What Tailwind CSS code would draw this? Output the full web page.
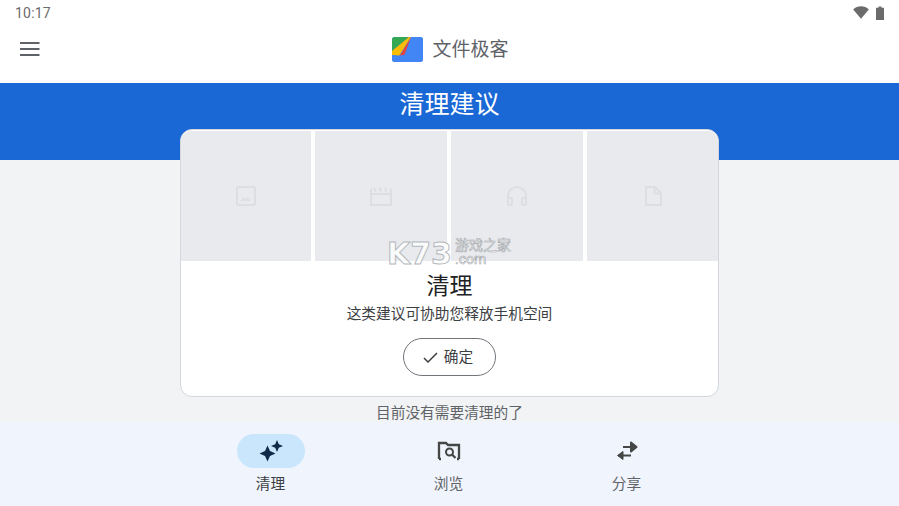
<!DOCTYPE html>
<html lang="zh">
<head>
<meta charset="utf-8">
<script src="https://cdn.jsdelivr.net/npm/@tailwindcss/browser@4"></script>
</head>
<body class="m-0 bg-white">
<div class="relative w-[899px] h-[506px] overflow-hidden flex flex-col bg-white font-['Roboto','Noto_Sans_CJK_SC',sans-serif]">
  <div class="h-[26px] flex items-center justify-between pl-[15px] pr-[15px] shrink-0">
    <span class="text-[14px] leading-none text-[#6b6b6b] tracking-[0.2px] -mt-[1px]">10:17</span>
    <div class="flex items-center gap-[7px] -mt-[1px]">
      <svg width="16" height="13" viewBox="0 0 16 13"><path d="M0.200 3.400C2.300 1.300 5 0.200 8 0.200s5.700 1.100 7.800 3.200L8 12.800z" fill="#6b6b6b"/></svg>
      <svg width="8" height="14" viewBox="0 0 8 14"><path d="M2.500 0.500h3v1.300H8V14H0V1.800h2.500z" fill="#6b6b6b"/></svg>
    </div>
  </div>
  <header class="h-[57px] shrink-0 relative flex items-center justify-center">
    <svg class="absolute left-[20px] top-[16px]" width="20" height="14" viewBox="0 0 20 14"><path d="M0 1h19.500M0 7h19.500M0 13h19.500" stroke="#5f6368" stroke-width="2" fill="none"/></svg>
    <div class="flex items-center gap-[9px] -mt-[11px] ml-[2px]">
      <svg width="31" height="25" viewBox="0 0 31 25">
        <rect width="31" height="25" rx="3" fill="#4285f4"/>
        <path d="M0 3a3 3 0 0 1 3-3h14L0 14z" fill="#34a853"/>
        <path d="M17 0h2L7 19 0 18v-4z" fill="#fbbc04"/>
        <path d="M19 0L9 17l-2 2 8-2z" fill="#ea4335"/>
        <path d="M19 0h9a3 3 0 0 1 3 3v19a3 3 0 0 1-3 3H3a3 3 0 0 1-3-3v-4l12 1z" fill="#4285f4"/>
      </svg>
      <span class="text-[19px] leading-none text-[#5f6368]">文件极客</span>
    </div>
  </header>
  <section class="h-[77px] shrink-0 bg-[#1a68d6] flex justify-center">
    <h1 class="m-0 mt-[6px] text-[25px] leading-[32px] font-normal text-white">清理建议</h1>
  </section>
  <main class="flex-1 bg-[#f1f3f5] flex flex-col items-center">
    <div class="relative w-[539px] h-[268px] -mt-[31px] shrink-0 rounded-[12px] bg-white border border-[#d4d7dc] overflow-hidden flex flex-col items-center">
      <div class="w-full h-[130px] mt-[1px] flex gap-[4px] shrink-0">
        <div class="w-[130px] bg-[#e8eaed] rounded-tl-[10px] flex items-center justify-center">
          <svg width="20" height="20" viewBox="0 0 20 20" fill="none"><rect x="1" y="1" width="18" height="18" rx="1.500" stroke="#dcdee1" stroke-width="2"/><path d="M4.500 15l3-4 2 2.500 1.800-2.500 3.200 4z" fill="#dcdee1"/></svg>
        </div>
        <div class="w-[132px] bg-[#e8eaed] flex items-center justify-center">
          <svg width="22" height="19" viewBox="0 0 22 19" fill="none"><path d="M1 7h20v11H1zM1 7V1.500M21 7V1.500" stroke="#dcdee1" stroke-width="2"/><path d="M4 0.500l1.500 4M9.500 0.500l1.500 4M15 0.500l1.500 4" stroke="#dcdee1" stroke-width="2"/></svg>
        </div>
        <div class="w-[132px] bg-[#e8eaed] flex items-center justify-center">
          <svg width="20" height="20" viewBox="0 0 20 20" fill="none"><path d="M1 16V10a9 9 0 0 1 18 0v6" stroke="#dcdee1" stroke-width="2"/><rect x="1" y="12" width="4" height="7" rx="1.500" stroke="#dcdee1" stroke-width="2"/><rect x="15" y="12" width="4" height="7" rx="1.500" stroke="#dcdee1" stroke-width="2"/></svg>
        </div>
        <div class="flex-1 bg-[#e8eaed] rounded-tr-[10px] flex items-center justify-center">
          <svg width="24" height="24" viewBox="0 0 24 24" fill="none"><path d="M5 3h9l6 6v12H5z" stroke="#dcdee1" stroke-width="2" stroke-linejoin="round"/><path d="M13.500 3v6.500H20" stroke="#dcdee1" stroke-width="2"/></svg>
        </div>
      </div>
      <h2 class="m-0 mt-[11px] text-[23px] leading-[30px] font-normal text-[#202124]">清理</h2>
      <p class="m-0 mt-[2px] text-[14.700px] leading-[20px] text-[#3c4043]">这类建议可协助您释放手机空间</p>
      <button class="mt-[14px] w-[93px] h-[38px] pr-[3px] rounded-full border border-[#70757a] bg-white flex items-center justify-center gap-[6px] text-[14.700px] text-[#3c4043]">
        <svg width="15" height="11" viewBox="0 0 15 11" fill="none"><path d="M1 6L5 10 14 1" stroke="#3c4043" stroke-width="1.500"/></svg>
        <span>确定</span>
      </button>
    </div>
    <p class="m-0 mt-[7px] h-[18px] text-[14.700px] leading-[18px] text-[#5f6368]">目前没有需要清理的了</p>
  </main>
  <nav class="h-[84px] shrink-0 bg-[#f0f4fc] flex justify-center gap-[110px] pr-[2px]">
    <div class="w-[68px] flex flex-col items-center pt-[12px]">
      <div class="w-[68px] h-[34px] rounded-full bg-[#c9e6fd] flex items-center justify-center">
        <svg width="26" height="24" viewBox="0 0 26 24"><path d="M9.500 6.500l2.500 5.500 5.500 2.500-5.500 2.500-2.500 5.500-2.500-5.500L1.500 14.500 7 12z" fill="#0f2a48"/><path d="M19 1l1.800 4.200L25 7l-4.200 1.800L19 13l-1.800-4.200L13 7l4.200-1.800z" fill="#0f2a48"/></svg>
      </div>
      <span class="mt-[6px] text-[14.700px] leading-[20px] text-[#3c4043]">清理</span>
    </div>
    <div class="w-[68px] flex flex-col items-center pt-[12px]">
      <div class="h-[34px] flex items-center justify-center">
        <svg width="24" height="20" viewBox="0 0 24 20" fill="none"><path d="M2 18V2h7l2 2h11v14" stroke="#444746" stroke-width="2.300"/><path d="M2 18h2M20 18h2" stroke="#444746" stroke-width="2.300"/><circle cx="12.500" cy="11" r="3.500" stroke="#444746" stroke-width="2"/><path d="M15 13.500l3.500 3.500" stroke="#444746" stroke-width="2.300"/></svg>
      </div>
      <span class="mt-[6px] text-[14.700px] leading-[20px] text-[#5f6368]">浏览</span>
    </div>
    <div class="w-[68px] flex flex-col items-center pt-[12px]">
      <div class="h-[34px] flex items-center justify-center">
        <svg width="22" height="20" viewBox="0 0 22 20" fill="none"><path d="M7 6h13M15 1.500L20.500 6 15 10.500z" stroke="#444746" stroke-width="2" fill="#444746" stroke-linejoin="round"/><path d="M15 14.500H3" stroke="#444746" stroke-width="2"/><path d="M7 10.500v8L1.500 14.500z" fill="#444746" stroke="#444746" stroke-width="1" stroke-linejoin="round"/></svg>
      </div>
      <span class="mt-[6px] text-[14.700px] leading-[20px] text-[#5f6368]">分享</span>
    </div>
  </nav>
  <div class="absolute left-[387px] top-[236px] flex items-start pointer-events-none">
    <span class="w-[68px] text-[30px] leading-[36px] font-bold text-white/80 [-webkit-text-stroke:1px_#b5b8bc] font-['DejaVu_Sans',sans-serif]">K73</span>
    <p class="m-0 mt-[2px] text-[14px] leading-[14px] text-white/80 [-webkit-text-stroke:0.6px_#a5a8ac]">游戏之家<br>.com</p>
  </div>
</div>
</body>
</html>
